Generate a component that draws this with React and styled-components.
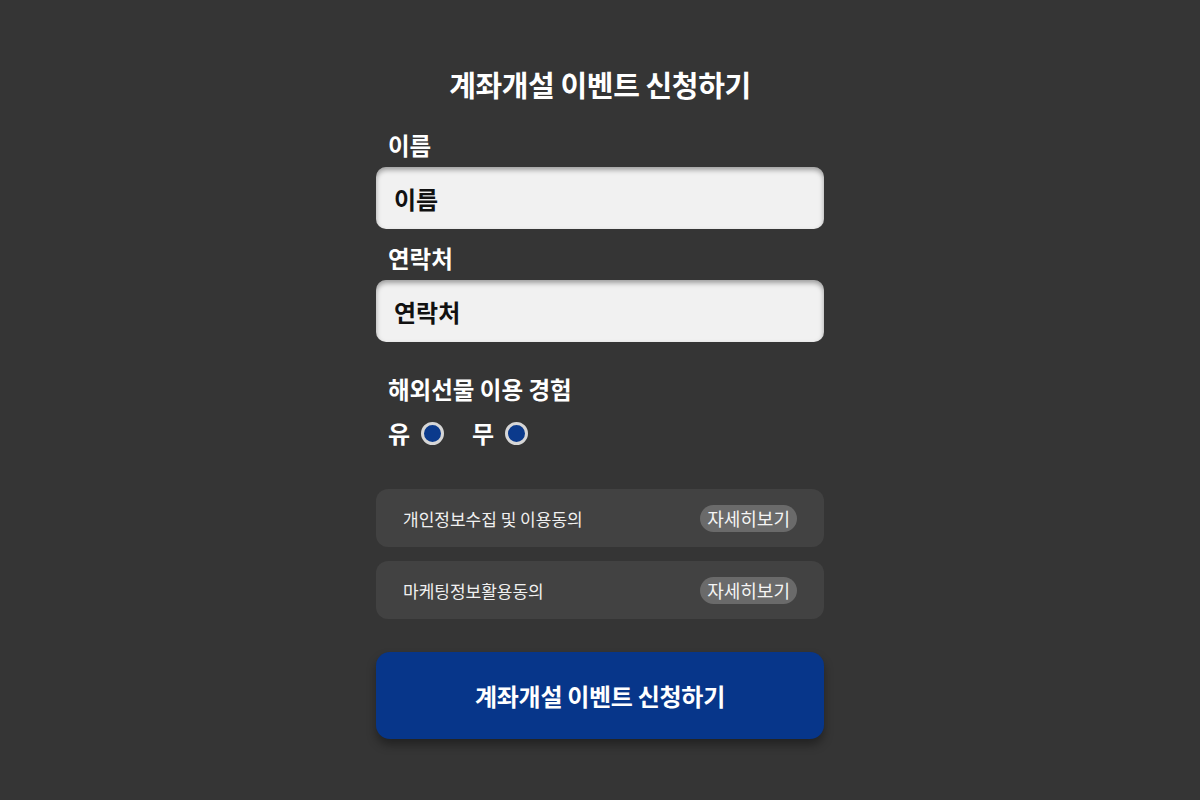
import React from "react";
import styled, { createGlobalStyle } from "styled-components";

const GlobalStyle = createGlobalStyle`
  html, body {
    margin: 0;
    padding: 0;
    background: #353535;
  }
  body {
    font-family: "Noto Sans CJK KR", "Noto Sans", sans-serif;
  }
`;

const Page = styled.div`
  min-height: 800px;
  display: flex;
  justify-content: center;
  background: #353535;
`;

const Form = styled.form`
  width: 448px;
  display: flex;
  flex-direction: column;
  padding-top: 64px;
`;

const Title = styled.h1`
  margin: 0 0 27px;
  text-align: center;
  font-size: 29px;
  line-height: 40px;
  font-weight: 700;
  color: #ffffff;
  letter-spacing: -0.4px;
`;

const Label = styled.label`
  display: block;
  padding-left: 12px;
  font-size: 23.5px;
  line-height: 28px;
  font-weight: 700;
  color: #ffffff;
  margin-bottom: ${(p) => p.$gap || 8}px;
`;

const Input = styled.input`
  box-sizing: border-box;
  width: 100%;
  height: 62px;
  margin-bottom: ${(p) => p.$gap || 15}px;
  padding: 0 18px;
  border: none;
  border-radius: 10px;
  background: #f1f1f1;
  box-shadow: inset 0 3px 5px rgba(0, 0, 0, 0.35);
  font-family: inherit;
  font-size: 24px;
  font-weight: 700;
  color: #111;
  outline: none;

  &::placeholder {
    color: #111;
    opacity: 1;
  }
`;

const RadioRow = styled.div`
  display: flex;
  align-items: center;
  gap: 28px;
  padding-left: 12px;
  margin-bottom: 42px;
`;

const RadioOption = styled.label`
  display: flex;
  align-items: center;
  gap: 11px;
  font-size: 24px;
  line-height: 28px;
  font-weight: 700;
  color: #ffffff;
`;

const RadioDot = styled.span`
  box-sizing: border-box;
  width: 23px;
  height: 23px;
  border-radius: 50%;
  border: 3px solid #d6d6d6;
  background: #0b3a8c;
`;

const AgreeBox = styled.div`
  box-sizing: border-box;
  height: 58px;
  display: flex;
  align-items: center;
  justify-content: space-between;
  padding: 0 27px;
  margin-bottom: 14px;
  border-radius: 12px;
  background: #424242;
`;

const AgreeText = styled.span`
  font-size: 17px;
  color: #f0f0f0;
`;

const DetailPill = styled.button`
  height: 27px;
  padding: 0 7px;
  border: none;
  border-radius: 14px;
  background: #6a6a6a;
  color: #f4f4f4;
  font-family: inherit;
  font-size: 18px;
  line-height: 27px;
`;

const Submit = styled.button`
  height: 87px;
  margin-top: 19px;
  border: none;
  border-radius: 14px;
  background: #07368a;
  box-shadow: 0 6px 10px rgba(0, 0, 0, 0.35);
  color: #ffffff;
  font-family: inherit;
  font-size: 24px;
  font-weight: 700;
  letter-spacing: -0.3px;
`;

const agreements = ["개인정보수집 및 이용동의", "마케팅정보활용동의"];

export default function App() {
  return (
    <Page>
      <GlobalStyle />
      <Form onSubmit={(e) => e.preventDefault()}>
        <Title>계좌개설 이벤트 신청하기</Title>

        <Label>이름</Label>
        <Input placeholder="이름" />

        <Label>연락처</Label>
        <Input placeholder="연락처" $gap={33} />

        <Label $gap={16}>해외선물 이용 경험</Label>
        <RadioRow>
          <RadioOption>
            유 <RadioDot />
          </RadioOption>
          <RadioOption>
            무 <RadioDot />
          </RadioOption>
        </RadioRow>

        {agreements.map((text) => (
          <AgreeBox key={text}>
            <AgreeText>{text}</AgreeText>
            <DetailPill type="button">자세히보기</DetailPill>
          </AgreeBox>
        ))}

        <Submit type="submit">계좌개설 이벤트 신청하기</Submit>
      </Form>
    </Page>
  );
}
